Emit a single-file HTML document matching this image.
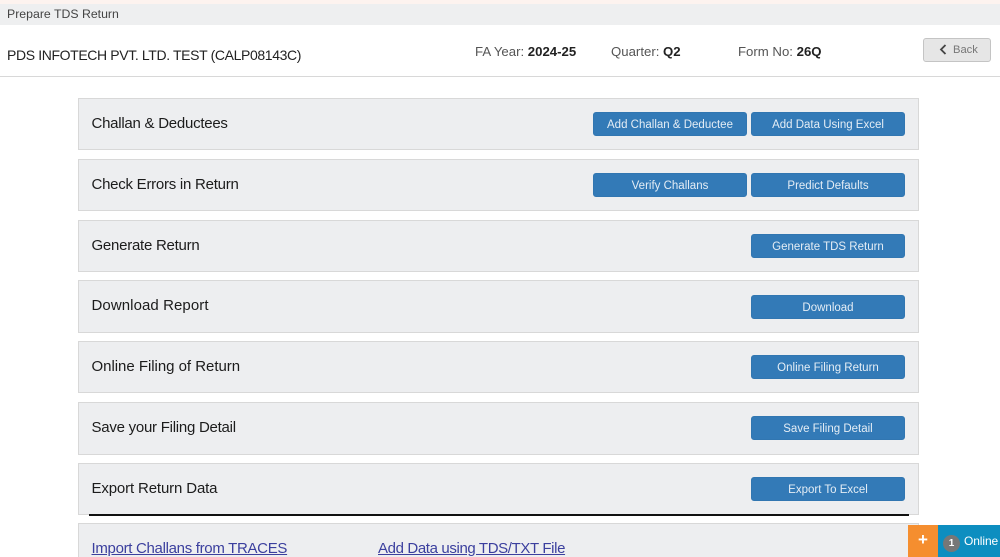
<!DOCTYPE html>
<html><head><meta charset="utf-8"><style>
html,body{margin:0;padding:0;background:#fff;height:557px;overflow:hidden}
body{width:1000px;position:relative;font-family:"Liberation Sans",sans-serif;color:#222}
div,a{position:absolute;box-sizing:border-box;white-space:nowrap}
.p{left:78px;width:841px;height:52px;background:#edeef0;border:1px solid #d8d8d8}
.t{left:91.5px;font-size:15px;letter-spacing:-.25px;line-height:20px;color:#1c1c1c}
.b{height:24px;background:#337ab7;border:1px solid #3176b1;border-radius:3px;color:#e4edf5;font-size:11.5px;line-height:24px;text-align:center}
.w{left:751px;width:154px}
.h{font-size:13.2px;line-height:18px;color:#555;top:43px}
.h b{color:#222}
</style></head><body>
<div style="left:0;top:0;width:1000px;height:4px;background:#fdf3ef"></div>
<div style="left:0;top:4px;width:1000px;height:21px;background:#eeeff0"></div>
<div style="left:7px;top:5px;font-size:12.3px;line-height:18px;color:#444">Prepare TDS Return</div>
<div style="left:0;top:76px;width:1000px;height:1px;background:#d8d8d8"></div>
<div style="left:7px;top:45px;font-size:14px;letter-spacing:-.37px;line-height:20px;color:#222">PDS INFOTECH PVT. LTD. TEST (CALP08143C)</div>
<div class="h" style="left:475px">FA Year: <b>2024-25</b></div>
<div class="h" style="left:611px">Quarter: <b>Q2</b></div>
<div class="h" style="left:738px">Form No: <b>26Q</b></div>
<div style="left:923px;top:38px;width:68px;height:24px;background:#e6e6e6;border:1px solid #c4c4c4;border-radius:3px;font-size:11.2px;line-height:22px;color:#777;padding-left:29px">Back
<svg style="position:absolute;left:15px;top:5px" width="8" height="11" viewBox="0 0 8 11"><path d="M6.5 1L2 5.5L6.5 10" fill="none" stroke="#444" stroke-width="1.8"/></svg></div>

<div class="p" style="top:98px"></div>
<div class="t" style="top:114px">Challan &amp; Deductees</div>
<div class="b" style="left:593px;top:112px;width:154px">Add Challan &amp; Deductee</div>
<div class="b w" style="top:112px">Add Data Using Excel</div>

<div class="p" style="top:159px"></div>
<div class="t" style="top:175px">Check Errors in Return</div>
<div class="b" style="left:593px;top:173px;width:154px">Verify Challans</div>
<div class="b w" style="top:173px">Predict Defaults</div>

<div class="p" style="top:220px"></div>
<div class="t" style="top:236px">Generate Return</div>
<div class="b w" style="top:234px">Generate TDS Return</div>

<div class="p" style="top:280px;height:53px"></div>
<div class="t" style="top:296px;letter-spacing:.08px">Download Report</div>
<div class="b w" style="top:295px">Download</div>

<div class="p" style="top:341px"></div>
<div class="t" style="top:357px;letter-spacing:-.03px">Online Filing of Return</div>
<div class="b w" style="top:355px">Online Filing Return</div>

<div class="p" style="top:402px;height:53px"></div>
<div class="t" style="top:418px">Save your Filing Detail</div>
<div class="b w" style="top:416px">Save Filing Detail</div>

<div class="p" style="top:463px"></div>
<div class="t" style="top:479px;letter-spacing:-.14px">Export Return Data</div>
<div class="b w" style="top:477px">Export To Excel</div>
<div style="left:89px;top:514px;width:820px;height:2px;background:#111"></div>

<div class="p" style="top:523px;height:34px;border-bottom:0"></div>
<a style="left:91.5px;top:540px;font-size:15px;letter-spacing:-.31px;line-height:18px;color:#3b3f9e;text-decoration:underline">Import Challans from TRACES</a>
<a style="left:378px;top:540px;font-size:15px;letter-spacing:-.37px;line-height:18px;color:#3b3f9e;text-decoration:underline">Add Data using TDS/TXT File</a>

<div style="left:908px;top:525px;width:30px;height:32px;background:#f58e2f;color:#fff;font-size:17px;font-weight:bold;line-height:29px;text-align:center">+</div>
<div style="left:938px;top:525px;width:62px;height:32px;background:#0d8ec0;overflow:hidden">
<div style="left:5px;top:10px;width:17px;height:17px;border-radius:50%;background:#777;color:#fff;font-size:10px;font-weight:bold;line-height:17px;text-align:center">1</div>
<div style="left:26px;top:8px;font-size:12px;letter-spacing:-.1px;line-height:16px;color:#fff">Online Users</div>
</div>
</body></html>
